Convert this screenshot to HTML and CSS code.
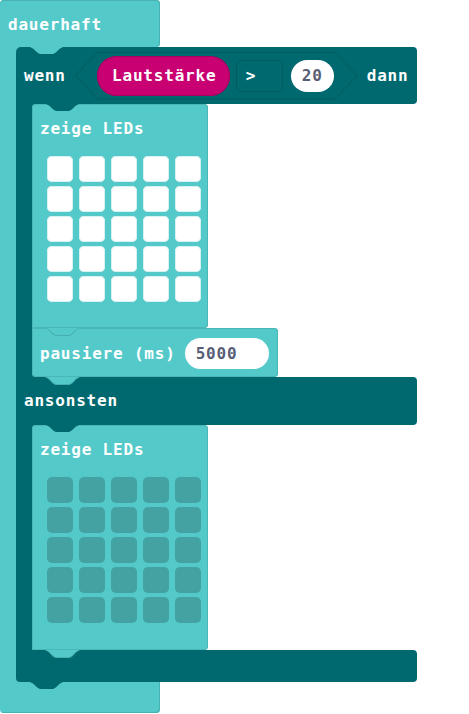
FILE: index.html
```html
<!DOCTYPE html>
<html lang="de">
  <head>
    <meta charset="UTF-8" />
    <meta name="viewport" content="width=device-width, initial-scale=1.0" />
    <title>dauerhaft</title>
    <link rel="stylesheet" href="styles.css">
  </head>
  <body>
    <div class="forever">
      <div class="forever-head"><span class="label">dauerhaft</span></div>
      <div class="forever-body">
        <div class="rail light"></div>
        <div class="ifelse">
          <div class="if-head">
            <span class="label">wenn</span>
            <div class="compare">
              <span class="pill sensor label">Lautstärke</span>
              <span class="dropdown label">&gt;</span>
              <span class="pill num label">20</span>
            </div>
            <span class="label">dann</span>
          </div>
          <div class="if-body">
            <div class="rail dark"></div>
            <div class="stack">
              <div class="block leds">
                <div class="label">zeige LEDs</div>
                <div class="grid">
                  <span class="led on"></span><span class="led on"></span><span class="led on"></span><span class="led on"></span><span class="led on"></span>
                  <span class="led on"></span><span class="led on"></span><span class="led on"></span><span class="led on"></span><span class="led on"></span>
                  <span class="led on"></span><span class="led on"></span><span class="led on"></span><span class="led on"></span><span class="led on"></span>
                  <span class="led on"></span><span class="led on"></span><span class="led on"></span><span class="led on"></span><span class="led on"></span>
                  <span class="led on"></span><span class="led on"></span><span class="led on"></span><span class="led on"></span><span class="led on"></span>
                </div>
              </div>
              <div class="block pause">
                <span class="label">pausiere (ms)</span>
                <span class="pill num wide label">5000</span>
              </div>
            </div>
          </div>
          <div class="if-head else"><span class="label">ansonsten</span></div>
          <div class="if-body">
            <div class="rail dark"></div>
            <div class="stack">
              <div class="block leds second">
                <div class="label">zeige LEDs</div>
                <div class="grid">
                  <span class="led"></span><span class="led"></span><span class="led"></span><span class="led"></span><span class="led"></span>
                  <span class="led"></span><span class="led"></span><span class="led"></span><span class="led"></span><span class="led"></span>
                  <span class="led"></span><span class="led"></span><span class="led"></span><span class="led"></span><span class="led"></span>
                  <span class="led"></span><span class="led"></span><span class="led"></span><span class="led"></span><span class="led"></span>
                  <span class="led"></span><span class="led"></span><span class="led"></span><span class="led"></span><span class="led"></span>
                </div>
              </div>
            </div>
          </div>
          <div class="if-foot"></div>
        </div>
      </div>
      <div class="forever-foot"></div>
    </div>
  </body>
</html>
```
FILE: styles.css
```css
body {
  margin: 0;
  background: #fff;
  font-family: "DejaVu Sans Mono", "Liberation Mono", monospace;
  font-weight: bold;
  font-size: 16px;
  color: #fff;
}
.label {
  letter-spacing: 0.8px;
  line-height: 20px;
  white-space: nowrap;
}

/* dauerhaft */
.forever-head {
  position: relative;
  width: 160px;
  height: 47px;
  box-sizing: border-box;
  padding: 15px 0 0 8px;
  background: #54c9c9;
  border-radius: 4px 4px 4px 0;
  box-shadow: inset -1px 0 0 #47b3b3, inset 0 1px 0 #47b3b3;
}
.forever-body {
  display: flex;
  background: linear-gradient(to right, #54c9c9 22px, transparent 22px);
}
.forever-foot {
  position: relative;
  width: 160px;
  height: 31px;
  background: #54c9c9;
  border-radius: 0 0 4px 4px;
  box-shadow: inset -1px -1px 0 #47b3b3;
}
.rail {
  width: 16px;
  flex-shrink: 0;
}
.rail.light {
  background: #54c9c9;
}
.rail.dark {
  background: #006970;
}

/* connection tabs */
.forever-head::after,
.if-head::after,
.if-foot::after,
.block::after,
.block::before {
  content: "";
  position: absolute;
  top: 100%;
  width: 33px;
  height: 7px;
  clip-path: polygon(0 0, 100% 0, 90% 25%, 78% 80%, 70% 100%, 30% 100%, 22% 80%, 10% 25%);
  z-index: 3;
}
.forever-head::after {
  left: 30px;
  background: #54c9c9;
}
.if-head::after {
  left: 30px;
  background: #006970;
}
.if-foot::after {
  left: 14px;
  background: #006970;
}
.block::before {
  left: 13px;
  width: 35px;
  height: 8px;
  background: #46b0b0;
  z-index: 2;
}
.block::after {
  left: 14px;
  background: #54c9c9;
}

/* wenn / ansonsten */
.ifelse {
  width: 401px;
}
.if-head {
  position: relative;
  display: flex;
  align-items: center;
  gap: 9px;
  height: 57px;
  box-sizing: border-box;
  padding-left: 8px;
  background: #006970;
  border-radius: 5px 4px 4px 0;
}
.if-head.else {
  height: 48px;
  border-radius: 0 4px 4px 0;
}
.if-body {
  display: flex;
}
.stack {
  display: flex;
  flex-direction: column;
  align-items: flex-start;
  flex: 1;
  background: linear-gradient(to right, #006970 6px, transparent 6px);
}
.if-foot {
  position: relative;
  height: 32px;
  background: #006970;
  border-radius: 0 4px 4px 4px;
}

/* Vergleich */
.compare {
  position: relative;
  display: flex;
  align-items: center;
  width: 283px;
  height: 48px;
  box-sizing: border-box;
  padding-left: 22px;
  background: #005a60;
  clip-path: polygon(0 50%, 23px 0, calc(100% - 23px) 0, 100% 50%, calc(100% - 23px) 100%, 23px 100%);
}
.compare::before {
  content: "";
  position: absolute;
  inset: 1px;
  background: #006970;
  clip-path: polygon(0 50%, 22px 0, calc(100% - 22px) 0, 100% 50%, calc(100% - 22px) 100%, 22px 100%);
}
.pill,
.dropdown {
  position: relative;
  display: flex;
  align-items: center;
  box-sizing: border-box;
}
.pill {
  justify-content: center;
}
.sensor {
  width: 133px;
  height: 40px;
  margin-right: 6px;
  padding-left: 2px;
  border-radius: 20px;
  background: #c90072;
  box-shadow: inset 0 0 0 1px #a8005f;
}
.dropdown {
  width: 47px;
  height: 32px;
  margin-right: 8px;
  padding-left: 9px;
  border: 1px solid #005a60;
  border-radius: 4px;
}
.num {
  width: 43px;
  height: 32px;
  border-radius: 16px;
  background: #fff;
  color: #575e75;
}
.num.wide {
  width: 84px;
  height: 31px;
  justify-content: flex-start;
  padding-left: 11px;
}

/* Anweisungen */
.block {
  position: relative;
  box-sizing: border-box;
  background: #54c9c9;
  box-shadow: inset 0 0 0 1px #4ab7b7;
}
.leds {
  width: 176px;
  height: 224px;
  padding: 15px 0 0 8px;
  border-radius: 4px 4px 4px 0;
}
.leds.second {
  height: 225px;
}
.grid {
  display: grid;
  grid-template-columns: repeat(5, 26px);
  grid-auto-rows: 26px;
  column-gap: 6px;
  row-gap: 4px;
  margin: 17px 0 0 7px;
}
.led {
  border-radius: 5px;
  background: #44a3a2;
}
.led.on {
  background: #fff;
  box-shadow: inset 0 0 0 1px #d6f1f1;
}
.pause {
  display: flex;
  align-items: center;
  gap: 9px;
  width: 246px;
  height: 49px;
  padding: 2px 0 0 8px;
  border-radius: 0 4px 4px 4px;
}
```
